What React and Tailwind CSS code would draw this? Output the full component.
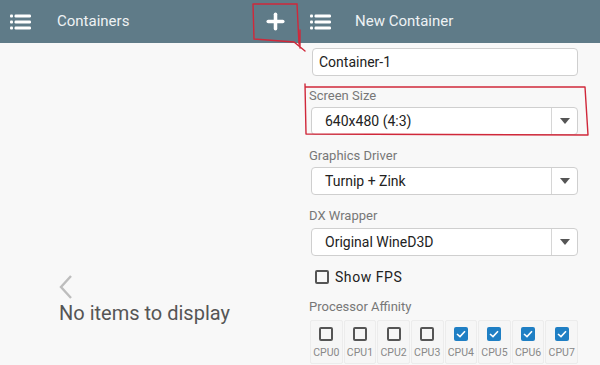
import { Plus } from 'lucide-react'

const font = { fontFamily: 'Roboto, "Noto Sans", sans-serif' }

function ListIcon() {
 return (
  <svg width="21" height="16" viewBox="0 0 21 16" className="shrink-0">
   <rect x="0" y="0.5" width="3" height="3" rx="1" fill="#fff" />
   <rect x="0" y="6.5" width="3" height="3" rx="1" fill="#fff" />
   <rect x="0" y="12.5" width="3" height="3" rx="1" fill="#fff" />
   <rect x="4.5" y="0.5" width="16.5" height="3" rx="1.2" fill="#fff" />
   <rect x="4.5" y="6.5" width="16.5" height="3" rx="1.2" fill="#fff" />
   <rect x="4.5" y="12.5" width="16.5" height="3" rx="1.2" fill="#fff" />
  </svg>
 )
}

function Select({ value }) {
 return (
  <div className="flex h-[28px] items-stretch rounded-[4px] border border-[#cfcfcf] bg-white">
   <div className="flex flex-1 items-center pl-[13px] text-[14px] text-[#222]">{value}</div>
   <div className="flex w-[26px] items-center justify-center border-l border-[#d6d6d6]">
    <svg width="10" height="6" viewBox="0 0 10 6">
     <path d="M0 0 L10 0 L5 6 Z" fill="#555" />
    </svg>
   </div>
  </div>
 )
}

function Label({ children, className = '' }) {
 return <div className={`h-[16px] pl-[9px] text-[13px] leading-[16px] text-[#777] ${className}`}>{children}</div>
}

function CheckBox({ checked }) {
 if (checked) {
  return (
   <span className="flex h-[14px] w-[14px] items-center justify-center rounded-[2px] bg-[#1f7fc4]">
    <svg width="10" height="8" viewBox="0 0 10 8">
     <path d="M1 4 L4 6.6 L9 1.3" stroke="#fff" strokeWidth="1.6" fill="none" />
    </svg>
   </span>
  )
 }
 return <span className="h-[14px] w-[14px] rounded-[2px] border-2 border-[#555]" />
}

const cpus = [false, false, false, false, true, true, true, true]

export default function App() {
 return (
  <div className="relative flex h-[365px] w-[600px] flex-col overflow-hidden bg-[#f8f8f8]" style={font}>
   <header className="flex h-[43px] shrink-0 items-center bg-[#5f7b88] text-[15px] text-[#eef2f4]">
    <div className="flex w-[300px] items-center pl-[10px]">
     <ListIcon />
     <span className="ml-[26px] flex-1">Containers</span>
     <Plus className="mr-[12px] h-[25px] w-[25px] text-white" strokeWidth={3.4} />
    </div>
    <div className="flex items-center pl-[10px]">
     <ListIcon />
     <span className="ml-[24px]">New Container</span>
    </div>
   </header>

   <div className="flex flex-1">
    <div className="flex w-[300px] flex-col pl-[59px] pt-[232px]">
     <svg width="14" height="24" viewBox="0 0 14 24">
      <path d="M12 1 L2 12 L12 23" stroke="#bdbdbd" strokeWidth="2.4" fill="none" />
     </svg>
     <div className="mt-[2px] text-[20px] leading-[25px] text-[#555]">No items to display</div>
    </div>

    <div className="flex flex-1 flex-col pr-[22px] pt-[5px]">
     <div className="ml-[12px] flex h-[28px] items-center rounded-[4px] border border-[#cfcfcf] bg-white pl-[6px] text-[14px] text-[#222]">
      Container-1
     </div>

     <Label className="mt-[12px]">Screen Size</Label>
     <div className="ml-[11px] mt-[3px]"><Select value="640x480 (4:3)" /></div>

     <Label className="mt-[13px]">Graphics Driver</Label>
     <div className="ml-[11px] mt-[3px]"><Select value="Turnip + Zink" /></div>

     <Label className="mt-[13px]">DX Wrapper</Label>
     <div className="ml-[11px] mt-[4px]"><Select value="Original WineD3D" /></div>

     <div className="ml-[15px] mt-[14px] flex h-[14px] items-center gap-[6px]">
      <CheckBox checked={false} />
      <span className="text-[14px] tracking-[0.04em] text-[#222]">Show FPS</span>
     </div>

     <Label className="mt-[15px]">Processor Affinity</Label>
     <div className="ml-[10px] mt-[5px] grid grid-cols-8 gap-[1px]">
      {cpus.map((c, i) => (
       <div key={i} className="flex h-[44px] flex-col items-center rounded-[2px] border border-[#ececec] bg-[#f6f6f6] pt-[6px]">
        <CheckBox checked={c} />
        <span className="mt-[5px] text-[10.5px] leading-[13px] text-[#888]">CPU{i}</span>
       </div>
      ))}
     </div>
    </div>
   </div>

   <svg className="pointer-events-none absolute inset-0" width="600" height="365" viewBox="0 0 600 365">
    <path d="M253 4 L297 4 L299 44 M253 4 L254 39 L294 42 L305 51 M300 30 L300 48"
     stroke="#d0283a" strokeWidth="1.4" fill="none" strokeLinecap="round" />
    <path d="M305 84 L306 134 L588 135 L585 87 L305 87"
     stroke="#d0283a" strokeWidth="1.4" fill="none" strokeLinecap="round" strokeLinejoin="round" />
   </svg>
  </div>
 )
}
